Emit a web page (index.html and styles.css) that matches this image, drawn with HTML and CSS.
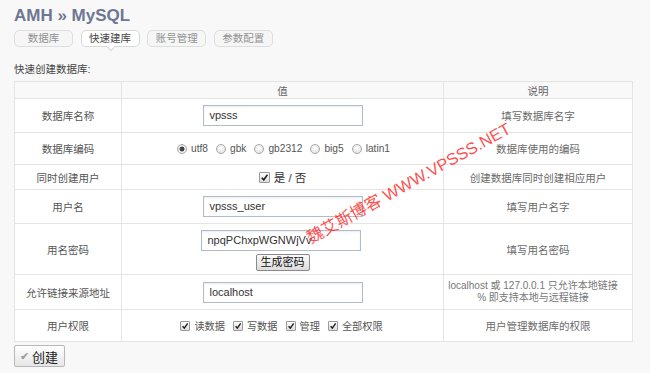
FILE: index.html
```html
<!DOCTYPE html>
<html>
<head>
<meta charset="utf-8">
<link rel="stylesheet" href="styles.css">
</head>
<body>
<div class="page">
  <h1 class="title">AMH » MySQL</h1>
  <div class="tabs">
    <span class="tab">数据库</span>
    <span class="tab active">快速建库</span>
    <span class="tab">账号管理</span>
    <span class="tab">参数配置</span>
  </div>
  <div class="caption">快速创建数据库:</div>
  <table class="grid">
    <colgroup><col class="c1"><col class="c2"><col class="c3"></colgroup>
    <tr class="head"><th></th><th>值</th><th>说明</th></tr>
    <tr class="r1">
      <td class="lab">数据库名称</td>
      <td><span class="field">vpsss</span></td>
      <td class="desc">填写数据库名字</td>
    </tr>
    <tr class="r2">
      <td class="lab">数据库编码</td>
      <td>
        <div class="opts radios">
          <span class="opt"><span class="radio on"></span>utf8</span>
          <span class="opt"><span class="radio"></span>gbk</span>
          <span class="opt"><span class="radio"></span>gb2312</span>
          <span class="opt"><span class="radio"></span>big5</span>
          <span class="opt"><span class="radio"></span>latin1</span>
        </div>
      </td>
      <td class="desc">数据库使用的编码</td>
    </tr>
    <tr class="r3">
      <td class="lab">同时创建用户</td>
      <td><span class="opt big"><span class="check lg"><svg viewBox="0 0 10 10"><path d="M2 5.2 L4.2 7.6 L8.3 1.8" fill="none" stroke="#222" stroke-width="1.8"/></svg></span>是 / 否</span></td>
      <td class="desc">创建数据库同时创建相应用户</td>
    </tr>
    <tr class="r4">
      <td class="lab">用户名</td>
      <td><span class="field">vpsss_user</span></td>
      <td class="desc">填写用户名字</td>
    </tr>
    <tr class="r5">
      <td class="lab">用名密码</td>
      <td>
        <div class="pw">
          <span class="field shift">npqPChxpWGNWjVv</span>
          <span class="gen">生成密码</span>
        </div>
      </td>
      <td class="desc">填写用名密码</td>
    </tr>
    <tr class="r6">
      <td class="lab">允许链接来源地址</td>
      <td><span class="field">localhost</span></td>
      <td class="desc small">localhost 或 127.0.0.1 只允许本地链接<br>% 即支持本地与远程链接</td>
    </tr>
    <tr class="r7">
      <td class="lab">用户权限</td>
      <td>
        <div class="opts perms">
          <span class="opt"><span class="check"><svg viewBox="0 0 10 10"><path d="M2 5.2 L4.2 7.6 L8.3 1.8" fill="none" stroke="#222" stroke-width="1.8"/></svg></span>读数据</span>
          <span class="opt"><span class="check"><svg viewBox="0 0 10 10"><path d="M2 5.2 L4.2 7.6 L8.3 1.8" fill="none" stroke="#222" stroke-width="1.8"/></svg></span>写数据</span>
          <span class="opt"><span class="check"><svg viewBox="0 0 10 10"><path d="M2 5.2 L4.2 7.6 L8.3 1.8" fill="none" stroke="#222" stroke-width="1.8"/></svg></span>管理</span>
          <span class="opt"><span class="check"><svg viewBox="0 0 10 10"><path d="M2 5.2 L4.2 7.6 L8.3 1.8" fill="none" stroke="#222" stroke-width="1.8"/></svg></span>全部权限</span>
        </div>
      </td>
      <td class="desc">用户管理数据库的权限</td>
    </tr>
  </table>
  <div class="actions">
    <span class="submit"><span class="tick">✔</span>创建</span>
  </div>
  <div class="watermark">魏艾斯博客 WWW.VPSSS.NET</div>
</div>
</body>
</html>
```
FILE: styles.css
```css
html, body {
  margin: 0;
  padding: 0;
  background: #f8f8f8;
}
body {
  font-family: "Liberation Sans", "Noto Sans CJK SC", sans-serif;
  font-size: 10.5px;
  color: #555;
  width: 650px;
  height: 373px;
  overflow: hidden;
}
.page {
  position: relative;
  padding: 0 18px 0 14px;
}
.title {
  margin: 0;
  padding-top: 6px;
  font-size: 17px;
  line-height: 20px;
  font-weight: bold;
  color: #6d7791;
}
.tabs {
  display: flex;
  gap: 7.6px;
  margin-top: 4px;
}
.tab {
  position: relative;
  box-sizing: border-box;
  width: 59px;
  height: 17px;
  line-height: 15px;
  text-align: center;
  border: 1px solid #dedede;
  border-radius: 5px;
  background: #f6f6f6;
  color: #929292;
  font-size: 10.5px;
}
.tab.active {
  background: #fff;
  color: #444;
  border-color: #d8d8d8;
}
.tab.active::after {
  content: "";
  position: absolute;
  left: 26px;
  bottom: -4px;
  width: 5px;
  height: 5px;
  background: #fff;
  border-right: 1px solid #d8d8d8;
  border-bottom: 1px solid #d8d8d8;
  transform: rotate(45deg);
}
.caption {
  margin-top: 16px;
  height: 13px;
  line-height: 13px;
  color: #444;
}
.grid {
  margin-top: 5px;
  border-collapse: collapse;
  table-layout: fixed;
  width: 618px;
  background: #fff;
}
.c1 { width: 107px; }
.c2 { width: 322px; }
.c3 { width: 189px; }
.grid th, .grid td {
  border: 1px solid #e4e4e4;
  padding: 0;
  text-align: center;
  vertical-align: middle;
}
.grid th {
  height: 16px;
  font-weight: normal;
  color: #666;
  background: #f9f9f9;
}
.r1 td { height: 33px; }
.r2 td { height: 31px; }
.r3 td { height: 24px; }
.r4 td { height: 33px; }
.r5 td { height: 50px; }
.r6 td { height: 34px; }
.r7 td { height: 31px; }
.lab { color: #555; }
.desc { color: #6a6a6a; }
.desc.small { line-height: 12px; color: #777; font-size: 10px; padding-right: 10px; }
.field {
  display: inline-block;
  box-sizing: border-box;
  width: 160px;
  height: 21px;
  line-height: 19px;
  padding-left: 6px;
  text-align: left;
  border: 1px solid #b0bccb;
  box-shadow: inset 0 1px 2px rgba(0,0,0,0.08);
  background: #fff;
  color: #333;
  font-size: 11px;
  vertical-align: middle;
}
.field.shift { margin-left: -4px; }
.pw {
  display: flex;
  flex-direction: column;
  align-items: center;
  gap: 3px;
  padding-top: 2px;
}
.gen {
  box-sizing: border-box;
  height: 17px;
  line-height: 15px;
  padding: 0 4px;
  border: 1px solid #8a8a8a;
  border-radius: 2px;
  background: linear-gradient(#fbfbfb, #dcdcdc);
  color: #111;
  font-size: 11px;
}
.opts {
  display: flex;
  justify-content: center;
  align-items: center;
  gap: 9px;
}
.radios { gap: 8px; margin-left: 2px; }
.radios .opt { font-size: 10.2px; }
.perms { gap: 8px; margin-left: -2px; }
.opt {
  display: inline-flex;
  align-items: center;
  gap: 3px;
  color: #555;
  font-size: 10.2px;
}
.perms .opt { gap: 4px; }
.opt.big { font-size: 11.5px; color: #333; gap: 4px; }
.radio {
  display: inline-block;
  box-sizing: border-box;
  width: 10px;
  height: 10px;
  border-radius: 50%;
  border: 1px solid #a8a8a8;
  background: radial-gradient(circle at 50% 35%, #fff, #dcdcdc);
  margin-right: 1px;
}
.radio.on {
  background: radial-gradient(circle, #444 0 2.2px, #f4f4f4 2.8px, #dcdcdc);
}
.check {
  display: inline-block;
  box-sizing: border-box;
  width: 10px;
  height: 10px;
  border: 1px solid #999;
  border-radius: 1px;
  background: linear-gradient(#fff, #ddd);
  line-height: 0;
}
.check.lg { width: 11px; height: 11px; }
.check svg { width: 100%; height: 100%; }
.actions {
  margin-top: 3px;
}
.submit {
  display: inline-flex;
  align-items: center;
  box-sizing: border-box;
  width: 51px;
  height: 22px;
  padding-left: 5px;
  gap: 3px;
  border: 1px solid #b8b8b8;
  border-radius: 2px;
  background: linear-gradient(#ffffff, #e6e6e6);
  color: #222;
  font-size: 13px;
}
.tick {
  color: #9a9a9a;
  font-size: 11px;
}
.watermark {
  position: absolute;
  left: 408px;
  top: 182px;
  transform: translate(-50%, -50%) rotate(-29deg);
  white-space: nowrap;
  font-size: 16.5px;
  color: rgba(255, 30, 30, 0.8);
  font-family: "Liberation Sans", "Noto Sans CJK SC", sans-serif;
}
```
